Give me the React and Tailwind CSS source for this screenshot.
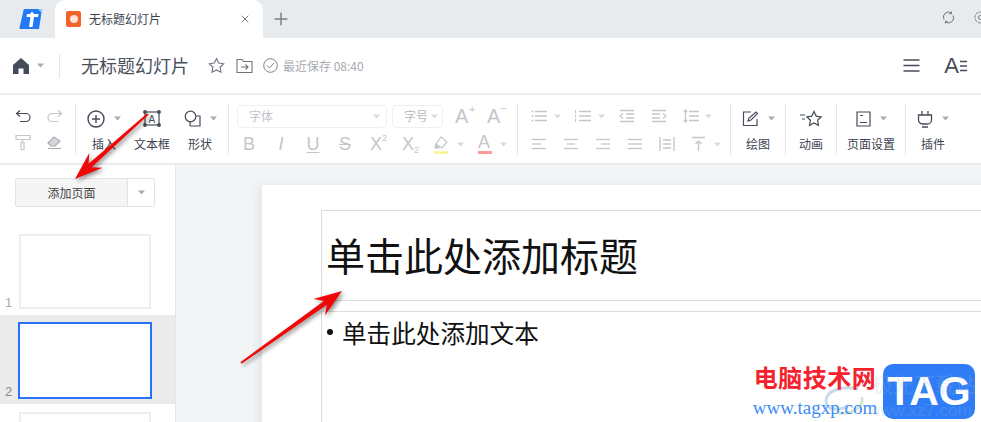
import React from 'react';
import { Plus, X } from 'lucide-react';

const Caret = ({ light }) => (
  <svg width="7" height="5" viewBox="0 0 7 5" className="shrink-0">
    <path d="M0 0.5h7L3.500 4.500z" fill={light ? '#d8dbdf' : '#a9adb3'} />
  </svg>
);

const Ico = ({ w = 20, h = 20, c = '#454c59', sw = 1.3, children }) => (
  <svg width={w} height={h} viewBox={`0 0 ${w} ${h}`} fill="none" stroke={c} strokeWidth={sw} className="shrink-0">
    {children}
  </svg>
);

const Sep = () => <div className="w-px h-[52px] bg-[#e6e6e6] shrink-0" />;

const Big = ({ w, label, icon, caret = true }) => (
  <div className="flex flex-col items-center shrink-0" style={{ width: w }}>
    <div className="h-[24px] flex items-center gap-[9px]">
      {icon}
      {caret && <Caret />}
    </div>
    <div className="text-[12px] leading-[16px] mt-[5px] text-[#3c4350]">{label}</div>
  </div>
);

const G = '#c3c6cb';
const arial = { fontFamily: '"Liberation Sans", sans-serif' };

const FontRow1 = () => (
  <div className="flex items-center h-[24px] pl-[8px]">
    <div className="w-[150px] h-[23px] border border-[#f0f0f0] rounded-[4px] flex items-center justify-between pl-[11px] pr-[6px] text-[12px] text-[#c0c3c8]">字体<Caret light /></div>
    <div className="w-[51px] h-[23px] ml-[5px] border border-[#f0f0f0] rounded-[4px] flex items-center justify-between pl-[11px] pr-[4px] text-[12px] text-[#b5b8bd]">字号<Caret light /></div>
    <span className="ml-[12px] w-[32px] text-[20px] text-[#c3c6cb] leading-none relative" style={arial}>A<span className="text-[11px] absolute -top-[2px] left-[14px]">+</span></span>
    <span className="w-[20px] text-[20px] text-[#c3c6cb] leading-none relative" style={arial}>A<span className="text-[11px] absolute -top-[3px] left-[13px]">−</span></span>
  </div>
);

const Cell = ({ children }) => <span className="w-[32px] flex justify-center">{children}</span>;

const FontRow2 = () => (
  <div className="flex items-center h-[24px] pl-[4px] text-[#c3c6cb] text-[18px] leading-none" style={arial}>
    <Cell>B</Cell>
    <Cell><span className="italic">I</span></Cell>
    <Cell><span className="underline underline-offset-2">U</span></Cell>
    <Cell><span className="line-through">S</span></Cell>
    <Cell><span className="relative pr-[2px]">X<span className="text-[9px] absolute -top-[1px] left-[12px]">2</span></span></Cell>
    <Cell><span className="relative pr-[2px]">X<span className="text-[9px] absolute -bottom-[2px] left-[12px]">2</span></span></Cell>
    <Cell>
      <Ico w={16} h={19} c={G} sw={1.2}>
        <path d="M8 2l6 5-5 6-6-4z" />
        <path d="M3 9l-1 4h4z" fill={G} />
        <path d="M1 17.500h14" stroke="#f6f28c" strokeWidth="2.400" />
      </Ico>
    </Cell>
    <Caret light />
    <span className="pl-[14px] w-[28px] flex flex-col items-start text-[18px] leading-[16px]">
      <span>A</span>
      <span className="w-[14px] h-[3px] bg-[#ff9a9a] mt-[1px]" />
    </span>
    <span className="ml-[8px]"><Caret light /></span>
  </div>
);

const Lines = ({ kind }) => {
  const rows = {
    left: [[1, 15], [1, 10], [1, 15]],
    center: [[1, 15], [4, 12], [1, 15]],
    right: [[1, 15], [6, 15], [1, 15]],
    just: [[1, 15], [1, 15], [1, 15]],
  }[kind];
  return (
    <Ico w={16} h={14} c={G}>
      {rows.map(([a, b], i) => <path key={i} d={`M${a} ${2.500 + i * 4.500}H${b}`} />)}
    </Ico>
  );
};

const ListRow1 = () => (
  <div className="flex items-center h-[24px] pl-[13px]">
    <div className="w-[44px] flex items-center gap-[7px]">
      <Ico w={16} h={14} c={G}><path d="M4 2.500h12M4 7h12M4 11.500h12M0.500 2.500h2M0.500 7h2M0.500 11.500h2" /></Ico><Caret light />
    </div>
    <div className="w-[44px] flex items-center gap-[7px]">
      <Ico w={16} h={14} c={G}><path d="M4 2.500h12M4 7h12M4 11.500h12M0.500 1v3M0.500 5.500v3M0.500 10v3" /></Ico><Caret light />
    </div>
    <div className="w-[32px]"><Ico w={16} h={14} c={G}><path d="M1 1.500h14M7 5h8M7 9h8M1 12.500h14M4 4.500L1 7l3 2.500" /></Ico></div>
    <div className="w-[32px]"><Ico w={16} h={14} c={G}><path d="M1 1.500h14M1 5h8M1 9h8M1 12.500h14M12 4.500L15 7l-3 2.500" /></Ico></div>
    <div className="flex items-center gap-[6px]">
      <Ico w={16} h={14} c={G}><path d="M6 2.500h10M6 7h10M6 11.500h10M2.500 1v12M1 3l1.500-2L4 3M1 11l1.500 2L4 11" /></Ico><Caret light />
    </div>
  </div>
);

const ListRow2 = () => (
  <div className="flex items-center h-[24px] pl-[13px]">
    <div className="w-[32px]"><Lines kind="left" /></div>
    <div className="w-[32px]"><Lines kind="center" /></div>
    <div className="w-[32px]"><Lines kind="right" /></div>
    <div className="w-[32px]"><Lines kind="just" /></div>
    <div className="w-[32px]"><Ico w={16} h={16} c={G}><path d="M1 1v14M15 1v14M4 8h8M4 12h8M4 4h8" /></Ico></div>
    <div className="flex items-center gap-[8px]">
      <Ico w={15} h={16} c={G}><path d="M1 1.500h13M7.500 15V5M4.500 8l3-3 3 3" /></Ico><Caret light />
    </div>
  </div>
);

// tapered red arrow, same shape as the annotation in the picture
const Arrow = ({ x1, y1, x2, y2 }) => {
  const a = Math.atan2(y2 - y1, x2 - x1);
  const pt = (bx, by, d, o) => `${bx - Math.cos(a) * d - Math.sin(a) * o},${by - Math.sin(a) * d + Math.cos(a) * o}`;
  const shaft = [pt(x1, y1, 0, 1), pt(x2, y2, 18, 2.400), pt(x2, y2, 18, -2.400), pt(x1, y1, 0, -1)].join(' ');
  const head = [`${x2},${y2}`, pt(x2, y2, 28, 10), pt(x2, y2, 20, 2), pt(x2, y2, 20, -2), pt(x2, y2, 28, -10)].join(' ');
  return (
    <g style={{ filter: 'drop-shadow(2px 2px 2px rgba(0,0,0,0.45))' }}>
      <polygon points={shaft} fill="#f00808" />
      <polygon points={head} fill="#f00808" />
    </g>
  );
};

const Thumb = ({ num, active }) => (
  <div className={active ? 'h-[89px] bg-[#ebebeb] pl-[18px] pt-[7px] relative' : 'h-[81px] pl-[19px] relative'}>
    <div className={active ? 'w-[134px] h-[77px] bg-white border-[2.500px] border-[#2970ff]' : 'w-[132px] h-[75px] bg-white border-2 border-[#eeeeee]'} />
    <span className={`absolute left-[5px] bottom-[6px] text-[13px] leading-none ${active ? 'text-[#888]' : 'text-[#aaa]'}`} style={arial}>{num}</span>
  </div>
);

export default function App() {
  return (
    <div className="w-[981px] h-[422px] overflow-hidden relative bg-white text-[#3c4350]" style={{ fontFamily: '"Noto Sans CJK SC", "Noto Sans", sans-serif' }}>
      {/* tab bar */}
      <div className="h-[38px] bg-[#e8ebee] flex items-end">
        <div className="w-[55px] h-[38px] flex items-center pl-[19px]">
          <svg width="24" height="22" viewBox="0 0 24 22">
            <path d="M6 1h17l-3 20H1.500a1 1 0 0 1-1-1.200L4.500 2.200A1.500 1.500 0 0 1 6 1z" fill="#2479f7" />
            <path d="M13 3.500l2 2.500h4.500l-.5 3h-4l-1.500 10h-3.500l1.500-10H7.500l.5-3h3z" fill="#fff" />
            <path d="M19 1h4.500l-.6 4z" fill="#8fd0ff" />
          </svg>
        </div>
        <div className="w-[208px] h-[38px] bg-white rounded-t-[10px] flex items-center pl-[11px] pr-[12px]">
          <div className="w-[15px] h-[16px] rounded-[2px] bg-[#f4622a] flex items-center justify-center">
            <div className="w-[8px] h-[8px] rounded-full bg-[#ffe3d6]" />
          </div>
          <span className="ml-[8px] text-[12px] text-[#3c4350]">无标题幻灯片</span>
          <X size={12} className="ml-auto text-[#777d86]" />
        </div>
        <div className="h-[38px] flex items-center ml-[8px]">
          <Plus size={20} strokeWidth={1.700} className="text-[#767c85]" />
        </div>
        <div className="ml-auto h-[38px] flex items-center gap-[19px] pb-[4px] -mr-[6px]">
          <Ico w={13} h={13} c="#6f757e" sw={1}><path d="M2 8.500A5 5 0 0 1 9.500 2.200M11 4.500A5 5 0 0 1 3.500 10.800M9.500 0.500v2.200H7.300M3.500 12.500v-2.200h2.200" /></Ico>
          <Ico w={13} h={13} c="#6f757e" sw={1}><circle cx="6.500" cy="6.500" r="2" /><circle cx="6.500" cy="6.500" r="5.500" strokeDasharray="3 1" /></Ico>
        </div>
      </div>

      {/* title bar */}
      <div className="h-[57px] border-b-2 border-[#ececec] flex items-center pl-[12px] pr-[14px]">
        <svg width="18" height="18" viewBox="0 0 18 18"><path d="M9 1L1 8v9h5.500v-5.500h5V17H17V8z" fill="#454c59" /></svg>
        <span className="ml-[7px]"><Caret /></span>
        <div className="w-px h-[24px] bg-[#e6e6e6] ml-[15px]" />
        <span className="ml-[21px] text-[18px] text-[#4a505c]">无标题幻灯片</span>
        <span className="ml-[19px]">
          <Ico w={17} h={17} c="#6f757e" sw={1.100}><path d="M8.500 1.500l2.200 4.600 5 .7-3.600 3.500.9 5-4.500-2.400L4 15.300l.9-5L1.300 6.800l5-.7z" /></Ico>
        </span>
        <span className="ml-[11px]">
          <Ico w={17} h={15} c="#6f757e" sw={1.100}><path d="M1 1.500h5l1.500 2H16v11H1zM5 9h7M9.500 6.500L12 9l-2.500 2.500" /></Ico>
        </span>
        <span className="ml-[10px]">
          <Ico w={15} h={15} c="#7a8088" sw={1}><circle cx="7.500" cy="7.500" r="6.800" /><path d="M4 7.500l2.500 2.500L11 5" /></Ico>
        </span>
        <span className="ml-[5px] text-[12px] text-[#a7abb1]">最近保存 08:40</span>
        <div className="ml-auto flex items-center">
          <Ico w={17} h={15} c="#454c59" sw={1.700}><path d="M0.500 2h16M0.500 7.500h16M0.500 13h16" /></Ico>
          <span className="ml-[24px] flex items-center gap-[1px] text-[#454c59]">
            <span className="text-[22px] leading-none" style={arial}>A</span>
            <Ico w={7} h={12} c="#454c59" sw={1.400}><path d="M0 1.500h7M0 6h7M0 10.500h7" /></Ico>
          </span>
        </div>
      </div>

      {/* toolbar */}
      <div className="h-[70px] border-b-2 border-[#ececec] flex items-center">
        <div className="w-[75px] shrink-0 pl-[15px]">
          <div className="grid grid-cols-[31px_17px] gap-y-[10px] items-center h-[52px] content-center">
            <Ico w={17} h={15} c="#454c59" sw={1.200}><path d="M5 1.500L1.500 4.500 5 7.500M1.500 4.500H11a4 4 0 0 1 0 8H5" /></Ico>
            <Ico w={17} h={15} c="#c3c6cb" sw={1.200}><path d="M12 1.500L15.500 4.500 12 7.500M15.500 4.500H6a4 4 0 0 0 0 8h6" /></Ico>
            <Ico w={16} h={16} c="#c3c6cb" sw={1.200}><path d="M1 1.500h14v4H1zM7.500 5.500v2.500M6 8.500h3v7H6z" /></Ico>
            <Ico w={17} h={15} c="#a9adb3" sw={1.200}><path d="M2 9l6-6 6 4-5 5H5z" fill="#d5d7da" /><path d="M2 14.500h13" /></Ico>
          </div>
        </div>
        <Sep />
        <Big w={56} label="插入" icon={<Ico w={18} h={18} sw={1.400}><circle cx="9" cy="9" r="8" /><path d="M9 5v8M5 9h8" /></Ico>} />
        <Big w={40} label="文本框" caret={false} icon={
          <svg width="18" height="17" viewBox="0 0 18 17" fill="none" stroke="#454c59" strokeWidth="1.200">
            <rect x="2" y="2" width="14" height="13" />
            <circle cx="2" cy="2" r="1.300" fill="#454c59" />
            <circle cx="16" cy="2" r="1.300" fill="#454c59" />
            <circle cx="2" cy="15" r="1.300" fill="#454c59" />
            <circle cx="16" cy="15" r="1.300" fill="#454c59" />
            <text x="5.500" y="12.500" fontSize="10" fill="#454c59" stroke="none" style={arial}>A</text>
          </svg>
        } />
        <Big w={56} label="形状" icon={<Ico w={17} h={17} sw={1.200}><path d="M6 16h10V6h-4" /><path d="M6 11v5" /><circle cx="6.500" cy="6.500" r="5.300" fill="#fff" /></Ico>} />
        <Sep />
        <div className="w-[288px] shrink-0 flex flex-col gap-[4px] pt-[2px]">
          <FontRow1 />
          <FontRow2 />
        </div>
        <Sep />
        <div className="w-[212px] shrink-0 flex flex-col gap-[4px] pt-[2px]">
          <ListRow1 />
          <ListRow2 />
        </div>
        <Sep />
        <Big w={54} label="绘图" icon={<Ico w={17} h={17} sw={1.200}><path d="M9 2H1.500v13.500H15V9M6 11l1-3 7-6 1.500 1.500-6.500 6.500z" /></Ico>} />
        <Sep />
        <Big w={50} label="动画" caret={false} icon={<Ico w={24} h={17} sw={1.200}><path d="M15 1.500l2.200 4.600 5 .7-3.600 3.500.9 5-4.500-2.400-4.500 2.400.9-5-3.600-3.500 5-.7zM1 5h5M3 9h3" /></Ico>} />
        <Sep />
        <Big w={68} label="页面设置" icon={<Ico w={15} h={16} sw={1.200}><path d="M1 1h13v14H1zM4 11.500h7M4 4.500h3" /></Ico>} />
        <Sep />
        <Big w={54} label="插件" icon={<Ico w={16} h={18} sw={1.300}><path d="M5 1v4M11 1v4M1.500 5h13v5a4 4 0 0 1-4 4h-5a4 4 0 0 1-4-4zM5 17h6" /></Ico>} />
      </div>

      {/* body */}
      <div className="flex h-[257px]">
        <div className="w-[176px] shrink-0 bg-white border-r border-[#e6e6e6] overflow-hidden">
          <div className="mt-[13px] ml-[15px] w-[140px] h-[29px] border border-[#e3e3e3] rounded-[2px] flex">
            <div className="w-[112px] bg-[#f5f5f5] border-r border-[#e3e3e3] flex items-center justify-center text-[12px] text-[#444]">添加页面</div>
            <div className="flex-1 flex items-center justify-center"><Caret /></div>
          </div>
          <div className="mt-[27px]"><Thumb num="1" /></div>
          <Thumb num="2" active />
          <div className="mt-[8px] ml-[19px] w-[132px] h-[75px] border-2 border-[#eeeeee]" />
        </div>
        <div className="flex-1 bg-[#f3f4f6] pl-[86px] pt-[20px] overflow-hidden">
          <div className="w-[800px] h-[400px] bg-white shadow-[-4px_0_8px_rgba(0,0,0,0.06)] pl-[59px] pt-[25px]">
            <div className="h-[91px] border-l border-t border-b border-[#dcdcdc] flex items-center pl-[4px] pb-[2px] text-[39px] text-[#111] leading-none">单击此处添加标题</div>
            <div className="mt-[10px] h-[200px] border-l border-t border-[#dcdcdc] pl-[5px] pt-[4px] text-[24.600px] text-[#111] leading-[32px] flex items-start">
              <span className="w-[6px] h-[6px] rounded-full bg-[#111] mt-[13px] mr-[9px]" />
              单击此处添加文本
            </div>
          </div>
        </div>
      </div>

      {/* red arrows drawn over the screenshot */}
      <svg className="absolute inset-0 pointer-events-none" width="981" height="422">
        <Arrow x1={148} y1={114} x2={75} y2={179} />
        <Arrow x1={241} y1={363} x2={342} y2={291} />
      </svg>

      {/* site watermark */}
      <svg className="absolute left-[822px] top-[385px]" width="44" height="34" viewBox="0 0 44 34" fill="none" strokeWidth="3">
        <path d="M36 4C20 0 4 6 4 16s16 10 22 4" stroke="#c9dbea" />
        <path d="M40 12c2 10-10 18-24 16" stroke="#d3e8d0" />
      </svg>
      <div className="absolute left-[752px] top-[363px] w-[126px] text-center">
        <div className="text-[24px] leading-[28px] font-bold text-[#f5222d] tracking-[0.500px] whitespace-nowrap">电脑技术网</div>
        <div className="text-[19px] leading-[20px] mt-[7px] text-[#3d8bf2] whitespace-nowrap" style={{ fontFamily: '"Liberation Serif", serif' }}>www.tagxp.com</div>
      </div>
      <div className="absolute left-[883px] top-[364px] w-[92px] h-[55px] rounded-[10px] bg-[#2f7df6] flex items-center justify-center text-white font-bold text-[41px] leading-none" style={arial}>TAG</div>
      <div className="absolute left-[872px] top-[373px] text-[21px] leading-none text-[#9db4c8] opacity-20 whitespace-nowrap">极光下载站</div>
      <div className="absolute left-[868px] top-[402px] text-[17px] leading-none text-[#9db4c8] opacity-20 whitespace-nowrap" style={arial}>www.xz7.com</div>
    </div>
  );
}
